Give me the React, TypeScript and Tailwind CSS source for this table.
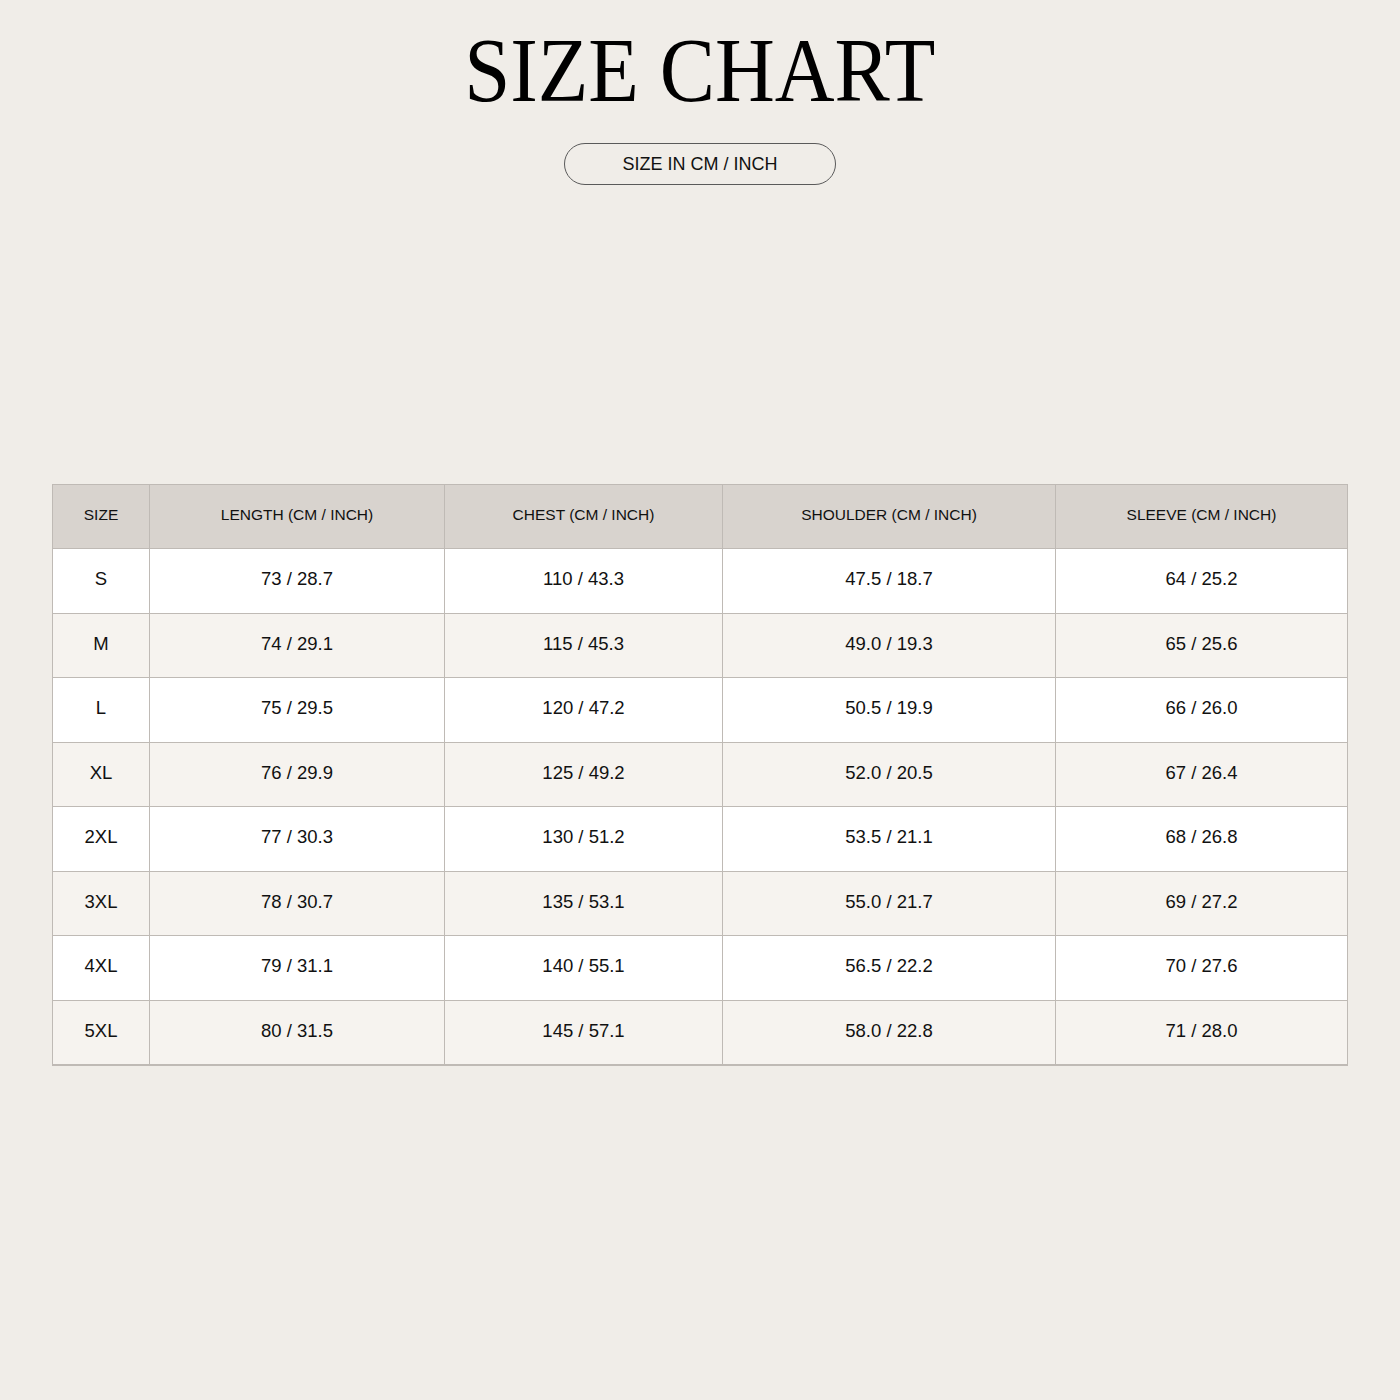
const COLUMNS = [
  { label: "SIZE", width: "w-[96px]" },
  { label: "LENGTH (CM / INCH)", width: "w-[295px]" },
  { label: "CHEST (CM / INCH)", width: "w-[278px]" },
  { label: "SHOULDER (CM / INCH)", width: "w-[333px]" },
  { label: "SLEEVE (CM / INCH)", width: "flex-1" },
];

const ROWS = [
  ["S", "73 / 28.7", "110 / 43.3", "47.5 / 18.7", "64 / 25.2"],
  ["M", "74 / 29.1", "115 / 45.3", "49.0 / 19.3", "65 / 25.6"],
  ["L", "75 / 29.5", "120 / 47.2", "50.5 / 19.9", "66 / 26.0"],
  ["XL", "76 / 29.9", "125 / 49.2", "52.0 / 20.5", "67 / 26.4"],
  ["2XL", "77 / 30.3", "130 / 51.2", "53.5 / 21.1", "68 / 26.8"],
  ["3XL", "78 / 30.7", "135 / 53.1", "55.0 / 21.7", "69 / 27.2"],
  ["4XL", "79 / 31.1", "140 / 55.1", "56.5 / 22.2", "70 / 27.6"],
  ["5XL", "80 / 31.5", "145 / 57.1", "58.0 / 22.8", "71 / 28.0"],
];

export default function App() {
  return (
    <main className="flex h-[1400px] w-[1400px] flex-col items-center bg-[#f0ede8] pt-6 font-['Liberation_Sans',Arial,sans-serif] text-[#111]">
      <h1 className="scale-x-[0.9] font-['Liberation_Serif','Times_New_Roman',serif] text-[92px] leading-none text-black">
        SIZE CHART
      </h1>
      <div className="mt-[27px] flex h-[42px] w-[272px] items-center justify-center rounded-full border border-[#5a5a5a] text-[18px]">
        SIZE IN CM / INCH
      </div>

      <div className="mt-[299px] w-[1296px] border border-b-2 border-[#bfbab5]">
        <div className="flex h-[63px] bg-[#d8d3ce] text-[15.5px]">
          {COLUMNS.map((col, i) => (
            <div
              key={col.label}
              className={`${col.width} flex items-center justify-center pb-[3px] ${i > 0 ? "border-l border-[#bfbab5]" : ""}`}
            >
              {col.label}
            </div>
          ))}
        </div>
        {ROWS.map((row, r) => (
          <div
            key={row[0]}
            className={`flex h-[64.5px] border-t border-[#bfbab5] text-[18.5px] ${r % 2 === 0 ? "bg-white" : "bg-[#f6f3ef]"}`}
          >
            {row.map((cell, i) => (
              <div
                key={i}
                className={`${COLUMNS[i].width} flex items-center justify-center pb-[3px] ${i > 0 ? "border-l border-[#bfbab5]" : ""}`}
              >
                {cell}
              </div>
            ))}
          </div>
        ))}
      </div>
    </main>
  );
}
